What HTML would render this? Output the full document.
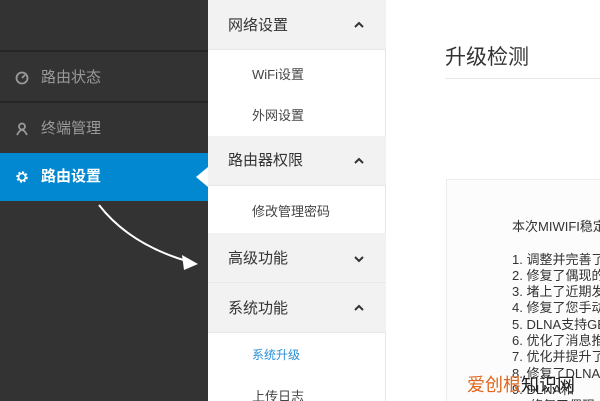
<!DOCTYPE html>
<html><head><meta charset="utf-8"><style>
*{margin:0;padding:0;box-sizing:border-box}
html,body{width:600px;height:401px;overflow:hidden}
body{position:relative;background:#fff;font-family:"Liberation Sans","Noto Sans CJK SC",sans-serif}
.side{position:absolute;left:0;top:0;width:208px;height:401px;background:#333}
.side .ln{position:absolute;left:0;width:208px;height:2px;background:#262626}
.nav{position:absolute;left:0;width:208px;height:48px;color:#9a9a9a;font-size:15px;line-height:48px;padding-left:41px}
.nav.act{background:#0288d1;color:#fff;font-weight:bold}
.nav svg{position:absolute;left:15px;top:17px}
.mid{position:absolute;left:208px;top:0;width:178px;height:401px;background:#fff;border-right:1px solid #e6e6e6}
.h{position:absolute;left:0;width:178px;background:#f2f2f2;color:#333;font-size:15px;padding-left:20px;border-bottom:1px solid #e8e8e8}
.h svg{position:absolute;right:22px;top:21px}
.i{position:absolute;left:44px;font-size:13px;color:#444}
.title{position:absolute;left:445px;top:41px;font-size:21px;color:#333}
.rule{position:absolute;left:445px;top:78px;width:155px;height:1px;background:#e8e8e8}
.box{position:absolute;left:446px;top:179px;width:154px;height:222px;border:1px solid #ececec;border-right:none;border-bottom:none;background:#fcfcfc}
.txtw{position:absolute;left:512px;top:219px;width:88px;height:182px;overflow:hidden}
.txt{font-size:13px;color:#333;line-height:16.3px;white-space:nowrap}
.wm{position:absolute;left:467px;top:371px;font-size:18px;white-space:nowrap}
</style></head><body>
<div class="side">
<div class="ln" style="top:50px"></div>
<div class="ln" style="top:101px"></div>
<div class="nav" style="top:54px"><svg width="14" height="14" viewBox="0 0 14 14"><circle cx="7" cy="7" r="5.5" fill="none" stroke="#9a9a9a" stroke-width="1.8"/><path d="M7 7 L10 4" stroke="#9a9a9a" stroke-width="1.8"/></svg>路由状态</div>
<div class="nav" style="top:105px"><svg width="14" height="14" viewBox="0 0 14 14"><circle cx="7" cy="4.5" r="3" fill="none" stroke="#9a9a9a" stroke-width="1.8"/><path d="M2 13 Q7 3 12 13" fill="none" stroke="#9a9a9a" stroke-width="1.8"/></svg>终端管理</div>
<div class="nav act" style="top:153px"><svg width="14" height="14" viewBox="0 0 14 14"><circle cx="7" cy="7" r="4.5" fill="none" stroke="#fff" stroke-width="2.4" stroke-dasharray="2 1.5"/><circle cx="7" cy="7" r="3.5" fill="none" stroke="#fff" stroke-width="1.6"/></svg>路由设置</div>
<svg style="position:absolute;left:0;top:0" width="208" height="401"><path d="M99 205 Q130 245 190 262" fill="none" stroke="#fff" stroke-width="2"/><path d="M198 264 L182 255 L184 270 Z" fill="#fff"/><path d="M208 167 L196 177 L208 187 Z" fill="#fff"/></svg>
</div>
<div class="mid">
<div class="h" style="top:0;height:50px;line-height:52px">网络设置<svg width="10" height="7" viewBox="0 0 10 7"><path d="M1 6 L5 2 L9 6" fill="none" stroke="#333" stroke-width="2"/></svg></div>
<div class="i" style="top:64px">WiFi设置</div>
<div class="i" style="top:105px">外网设置</div>
<div class="h" style="top:136px;height:50px;line-height:50px">路由器权限<svg width="10" height="7" viewBox="0 0 10 7"><path d="M1 6 L5 2 L9 6" fill="none" stroke="#333" stroke-width="2"/></svg></div>
<div class="i" style="top:201px">修改管理密码</div>
<div class="h" style="top:233px;height:50px;line-height:52px">高级功能<svg width="10" height="7" viewBox="0 0 10 7" style="top:23px"><path d="M1 1 L5 5 L9 1" fill="none" stroke="#333" stroke-width="2"/></svg></div>
<div class="h" style="top:283px;height:50px;line-height:52px">系统功能<svg width="10" height="7" viewBox="0 0 10 7"><path d="M1 6 L5 2 L9 6" fill="none" stroke="#333" stroke-width="2"/></svg></div>
<div class="i" style="top:346px;color:#2a8fd8;font-size:12px">系统升级</div>
<div class="i" style="top:386px">上传日志</div>
</div>
<div class="title">升级检测</div>
<div class="rule"></div>
<div class="box"></div>
<div class="txtw"><div class="txt">本次MIWIFI稳定版更新<br><br>1. 调整并完善了功能<br>2. 修复了偶现的问题<br>3. 堵上了近期发现<br>4. 修复了您手动<br>5. DLNA支持GB<br>6. 优化了消息推送<br>7. 优化并提升了<br>8. 修复了DLNA<br>9. DLNA和<br>10.修复了偶现</div></div>
<div class="wm"><span style="color:#e0661e">爱创根</span><span style="color:#222">知识网</span></div>
</body></html>
